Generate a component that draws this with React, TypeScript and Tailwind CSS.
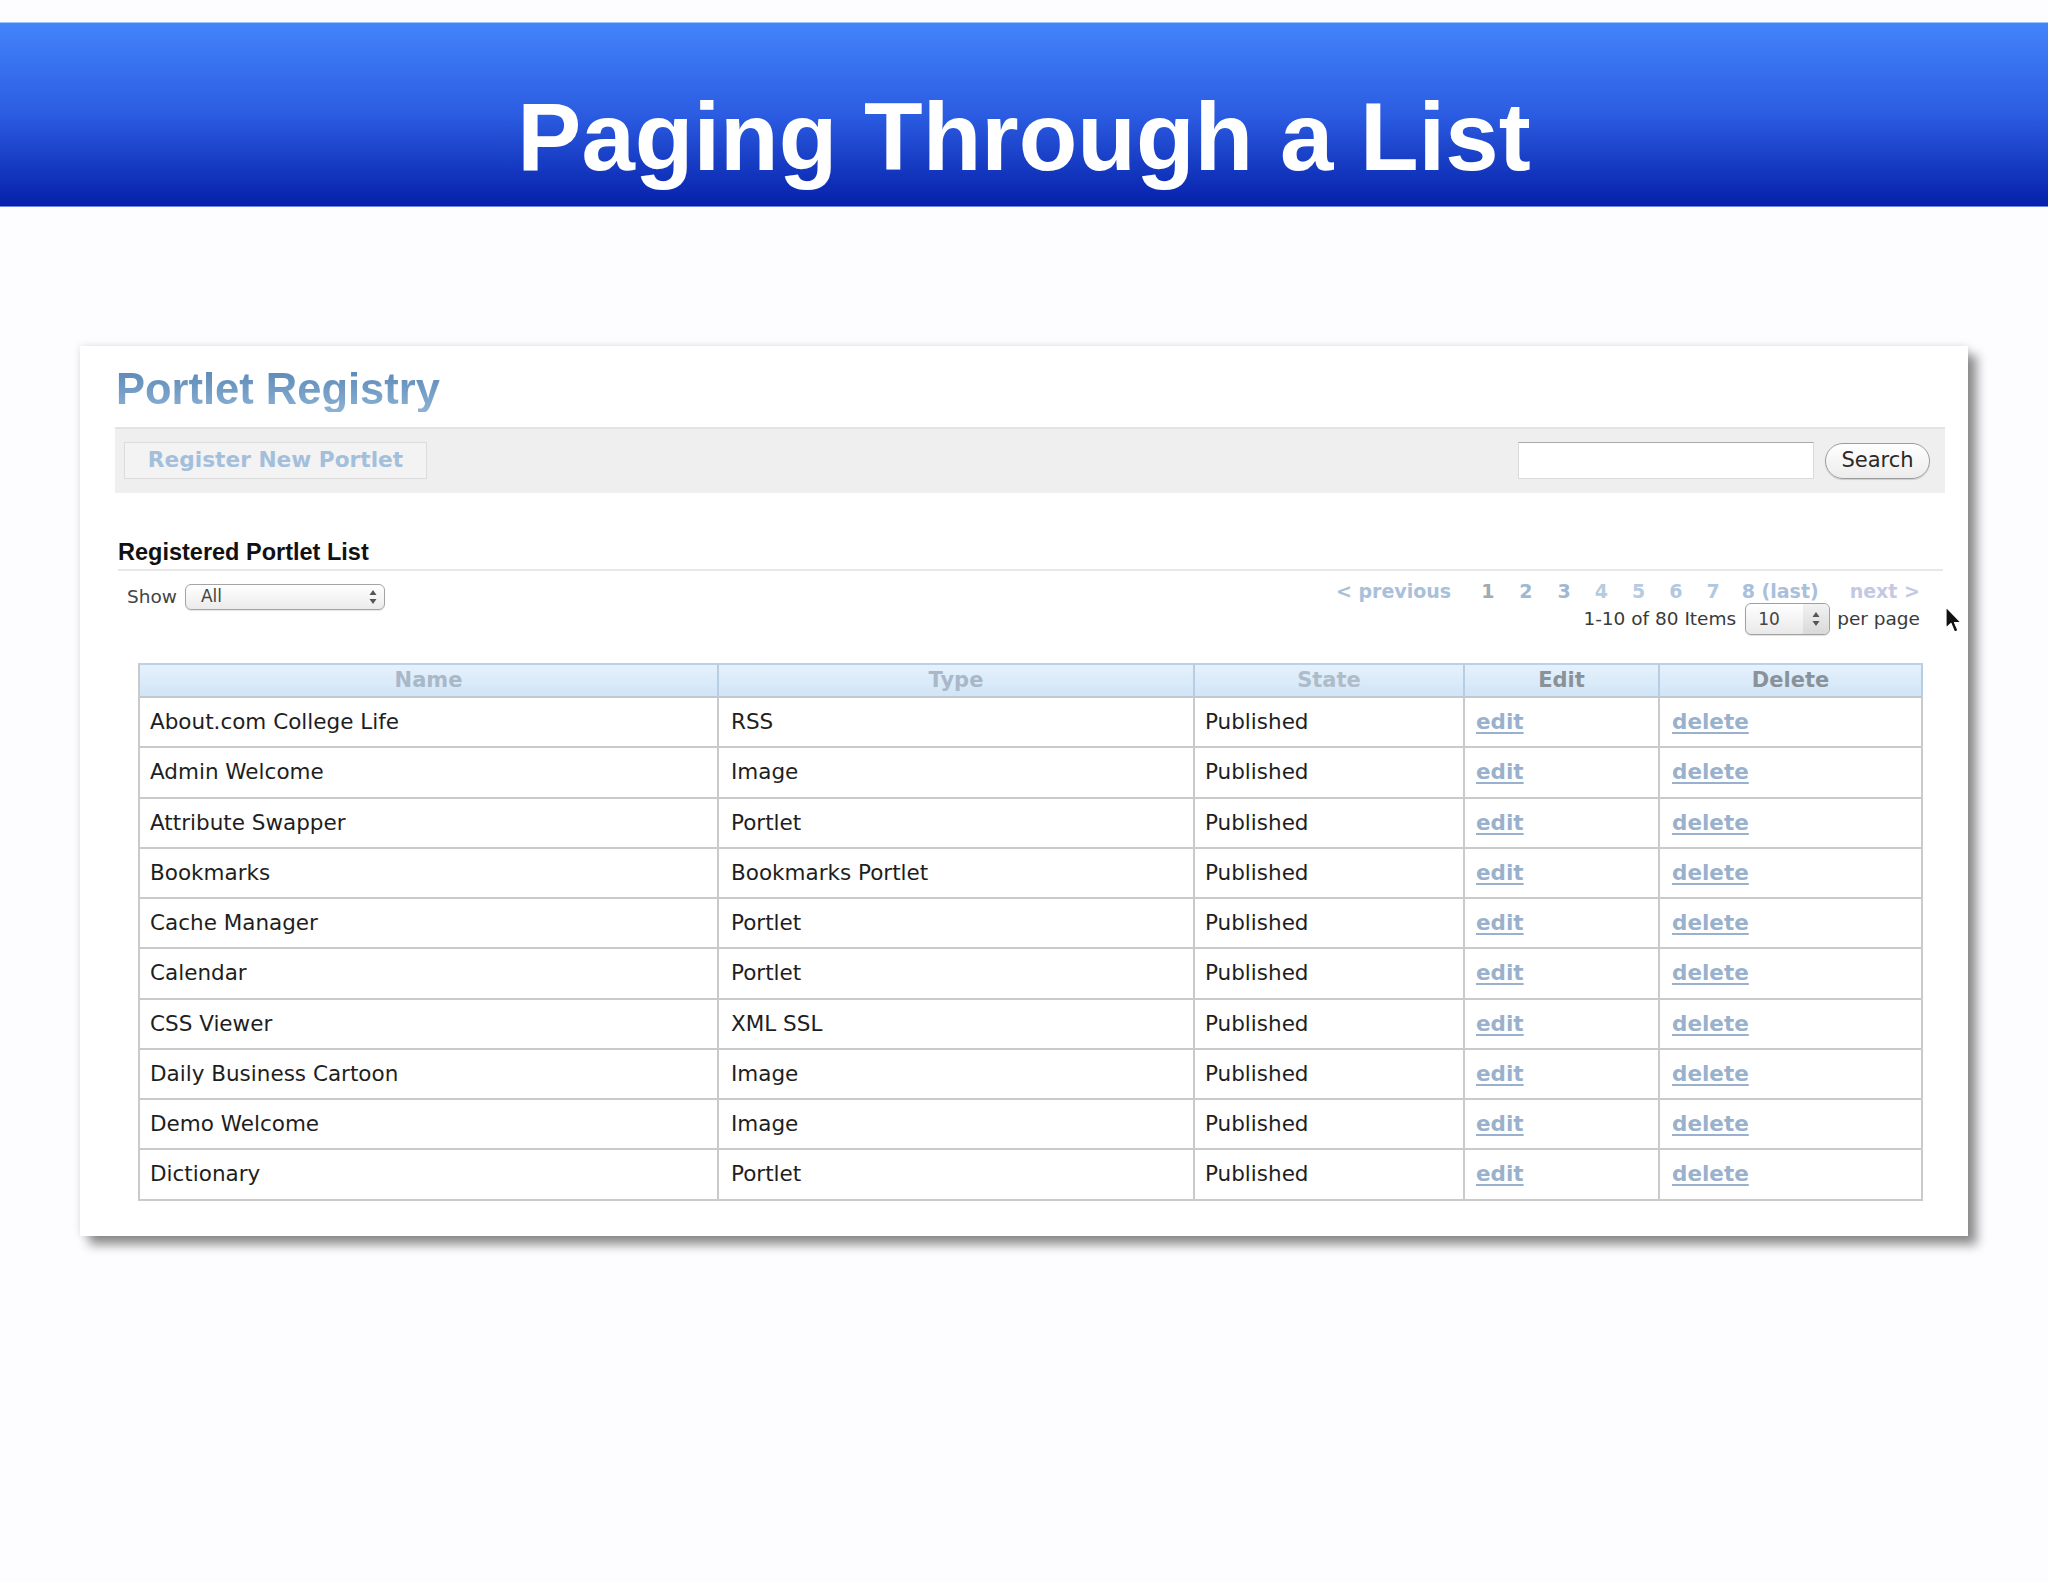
import React from "react";

const rows: [string, string][] = [
  ["About.com College Life", "RSS"],
  ["Admin Welcome", "Image"],
  ["Attribute Swapper", "Portlet"],
  ["Bookmarks", "Bookmarks Portlet"],
  ["Cache Manager", "Portlet"],
  ["Calendar", "Portlet"],
  ["CSS Viewer", "XML SSL"],
  ["Daily Business Cartoon", "Image"],
  ["Demo Welcome", "Image"],
  ["Dictionary", "Portlet"],
];

function Arrows() {
  return (
    <svg width="10" height="16" viewBox="0 0 10 16">
      <path d="M5 1 L8.5 6 L1.5 6 Z" fill="#555" />
      <path d="M5 15 L8.5 10 L1.5 10 Z" fill="#555" />
    </svg>
  );
}

function Cursor() {
  return (
    <svg width="20" height="28" viewBox="0 0 20 28">
      <path
        d="M2 1 L2 22 L7 17.5 L10.5 26 L14 24.5 L10.5 16.5 L17 16.5 Z"
        fill="#111"
        stroke="#fff"
        strokeWidth="1.2"
        strokeLinejoin="round"
      />
    </svg>
  );
}

export default function App() {
  const sans = { fontFamily: '"DejaVu Sans", Verdana, sans-serif' };
  return (
    <div className="min-h-[1582px] w-[2048px] bg-[#fdfcfe] pt-[22px]" style={{ fontFamily: '"Liberation Sans", Arial, sans-serif' }}>
      {/* Title bar */}
      <div className="h-[185px] border-t border-b border-t-[#9cc4ff] border-b-[#6f86e6] bg-[linear-gradient(to_bottom,#4384fa,#2b5ce1_50%,#0620aa)] pt-[66px] text-center">
        <div className="text-[96px] font-bold leading-none text-white" style={{ fontFamily: '"Liberation Sans", Arial, sans-serif' }}>
          Paging Through a List
        </div>
      </div>

      {/* Card */}
      <div className="relative ml-[80px] mt-[139px] w-[1888px] bg-white pl-[35px] pr-[23px] pt-[22px] pb-[35px] shadow-[0_0_8px_rgba(0,0,0,0.12),9px_9px_10px_rgba(0,0,0,0.42)]">
        <div className="ml-px bg-[linear-gradient(to_bottom,#5987b6,#8db2d4)] bg-clip-text text-[43.5px] font-bold leading-none text-transparent">
          Portlet Registry
        </div>

        {/* Toolbar */}
        <div className="mt-[15px] flex h-[66px] items-center justify-between border-t-2 border-[#e3e3e3] bg-[#efefef] pl-[9px] pr-[15px]">
          <div
            className="flex h-[37px] w-[303px] items-center justify-center border border-[#dcdcdc] bg-[#f3f3f3] text-[21.7px] font-bold text-[#a4bfdc]"
            style={sans}
          >
            Register New Portlet
          </div>
          <div className="flex items-center">
            <div className="h-[37px] w-[296px] border border-[#dadada] border-t-[#a9a9a9] bg-white" />
            <div
              className="ml-[11px] flex h-[36px] w-[105px] items-center justify-center rounded-full border border-[#9c9c9c] bg-[linear-gradient(to_bottom,#ffffff,#ececec)] text-[21px] text-[#2a2a2a] shadow-[0_1px_1px_rgba(0,0,0,0.15)]"
              style={sans}
            >
              Search
            </div>
          </div>
        </div>

        {/* Registered list heading */}
        <div className="mr-[2px] ml-[3px] mt-[48px] border-b-2 border-[#e8e8e8] pb-[5px] text-[23.5px] font-bold leading-none text-[#111]">
          Registered Portlet List
        </div>

        <div className="ml-[3px] mr-[2px] flex items-start justify-between pr-[23px] pl-[9px]" style={sans}>
          <div className="mt-[12px] flex items-center">
            <span className="text-[18.5px] text-[#444]">Show</span>
            <div className="ml-[8px] flex h-[26px] w-[200px] items-center justify-between rounded-[6px] border border-[#a4a4a4] bg-[linear-gradient(to_bottom,#ffffff,#ebebeb)] pl-[15px] pr-[6px] shadow-[0_1px_1px_rgba(0,0,0,0.1)]">
              <span className="text-[17px] leading-none text-[#444]">All</span>
              <Arrows />
            </div>
          </div>
          <div className="flex flex-col items-end">
            <div className="mt-[9px] flex h-[22px] items-center text-[19px] font-bold leading-none">
              <span className="text-[#a9c0da]">&lt; previous</span>
              <span className="ml-[30px] text-[#a2aab2]">1</span>
              <span className="ml-[25px] text-[#9fb8d2]">2</span>
              <span className="ml-[25px] text-[#9fb8d2]">3</span>
              <span className="ml-[24px] text-[#b6cbe0]">4</span>
              <span className="ml-[24px] text-[#b6cbe0]">5</span>
              <span className="ml-[24px] text-[#b2c8de]">6</span>
              <span className="ml-[24px] text-[#b2c8de]">7</span>
              <span className="ml-[22px] text-[#a8c0dc]">8 (last)</span>
              <span className="ml-[31px] text-[#c3c8e4]">next &gt;</span>
            </div>
            <div className="mt-px flex h-[32px] items-center">
              <span className="text-[18.5px] text-[#3a3a3a]">1-10 of 80 Items</span>
              <div className="ml-[9px] flex h-[32px] w-[85px] items-center justify-between rounded-[6px] border border-[#a0a0a0] bg-[linear-gradient(to_bottom,#ffffff,#e9e9e9)] pl-[12px] shadow-[0_1px_1px_rgba(0,0,0,0.12)]">
                <span className="text-[17px] leading-none text-[#444]">10</span>
                <div className="flex h-full w-[26px] items-center justify-center rounded-r-[6px] bg-[linear-gradient(to_bottom,#f2f2f2,#d9d9d9)]">
                  <Arrows />
                </div>
              </div>
              <span className="ml-[7px] text-[18.5px] text-[#3a3a3a]">per page</span>
            </div>
          </div>
        </div>

        {/* Table */}
        <div className="ml-[23px] mr-[22px] mt-[28px] border-l-2 border-t-2 border-l-[#cacaca] border-t-[#b8d2ea]" style={sans}>
          <div className="grid h-[33px] grid-cols-[579px_476px_270px_195px_263px] bg-[linear-gradient(to_bottom,#e6f1fc,#cfe4f6)] text-[21px] font-bold">
            {[
              ["Name", "text-[#a9b8c8]"],
              ["Type", "text-[#a9b8c8]"],
              ["State", "text-[#aebcca]"],
              ["Edit", "text-[#8a9299]"],
              ["Delete", "text-[#8a9299]"],
            ].map(([t, c]) => (
              <div
                key={t}
                className={`flex h-[33px] items-center justify-center border-r-2 border-b-2 border-r-[#b6cde2] border-b-[#c2c8ce] ${c}`}
              >
                {t}
              </div>
            ))}
          </div>
          {rows.map(([name, type]) => (
            <div key={name} className="grid h-[50.25px] grid-cols-[579px_476px_270px_195px_263px] text-[21.5px] text-[#1e1e1e]">
              <div className="flex items-center border-r-2 border-b-2 border-[#cacaca] pl-[10px]">{name}</div>
              <div className="flex items-center border-r-2 border-b-2 border-[#cacaca] pl-[12px]">{type}</div>
              <div className="flex items-center border-r-2 border-b-2 border-[#cacaca] pl-[10px]">Published</div>
              <div className="flex items-center border-r-2 border-b-2 border-[#cacaca] pl-[11px]">
                <span className="text-[21.5px] font-bold text-[#99b1cc] underline decoration-2 underline-offset-[3px]">edit</span>
              </div>
              <div className="flex items-center border-r-2 border-b-2 border-[#cacaca] pl-[12px]">
                <span className="text-[21.5px] font-bold text-[#99b1cc] underline decoration-2 underline-offset-[3px]">delete</span>
              </div>
            </div>
          ))}
        </div>

        <div className="absolute left-[1864px] top-[260px]">
          <Cursor />
        </div>
      </div>
    </div>
  );
}
